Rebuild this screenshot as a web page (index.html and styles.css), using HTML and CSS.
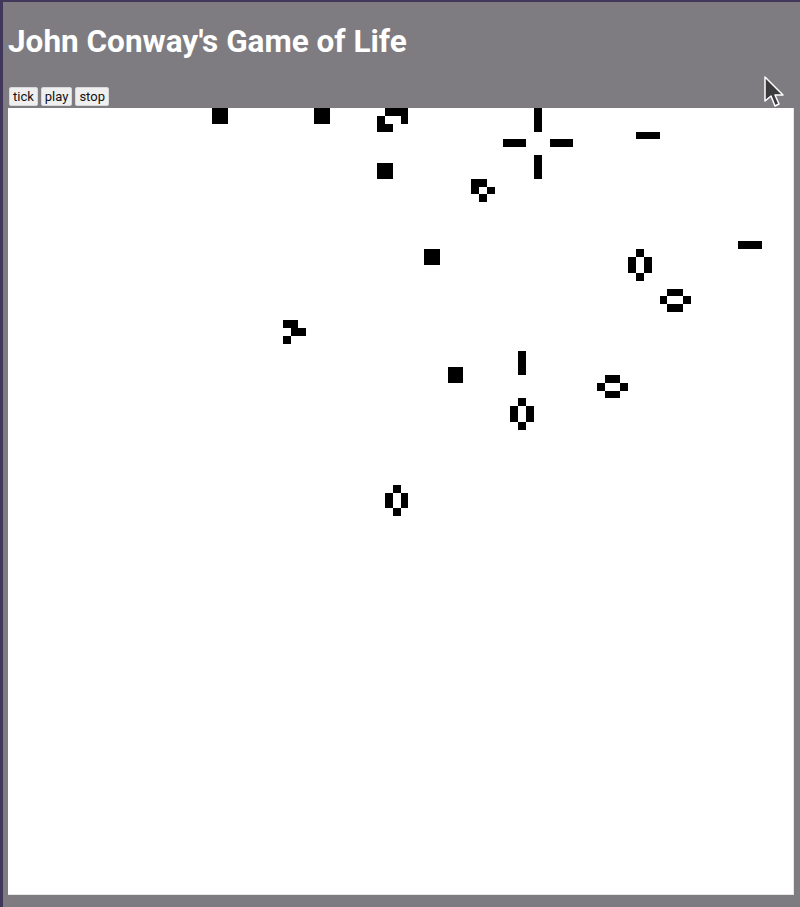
FILE: index.html
```html
<!DOCTYPE html>
<html lang="en">
<head>
  <meta charset="UTF-8">
  <title>John Conway's Game of Life</title>
  <link rel="stylesheet" href="styles.css">
</head>
<body>
  <h1 class="title">John Conway's Game of Life</h1>
  <div class="controls">
    <button id="tick">tick</button>
    <button id="play">play</button>
    <button id="stop">stop</button>
  </div>
  <canvas id="board" class="board" width="785" height="786"></canvas>
  <svg class="cursor" width="22" height="34" viewBox="0 0 22 34">
    <path d="M2 2 L2 26 L8 21 L12 31 L16 29 L12 20 L20 20 Z" fill="#3b3b3d" stroke="#fff" stroke-width="1.5" stroke-linejoin="round"/>
  </svg>
  <script src="life.js"></script>
</body>
</html>
```

FILE: styles.css
```css
html { background: #7e7c80; }
body {
  margin: 0;
  padding: 0 7px 12px 5px;
  border-top: 2px solid #41375a;
  border-left: 3px solid #41375a;
  font-family: Roboto, Arial, sans-serif;
  position: relative;
}
.title {
  margin: 0;
  padding-top: 20px;
  font-size: 31.5px;
  font-weight: bold;
  color: #fff;
  line-height: 40px;
}
.controls {
  margin-top: 25px;
  margin-bottom: 2px;
  display: flex;
  gap: 3px;
  padding-left: 1px;
}
.controls button {
  font-family: Roboto, Arial, sans-serif;
  font-size: 13px;
  padding: 0 3px;
  height: 19px;
  background: #efefef;
  border: 1px solid #d8d8d8;
  border-radius: 2px;
  color: #111;
}
.board {
  display: block;
  background: #fff;
  border-right: 1px solid #e6e6e6;
  border-bottom: 1px solid #e6e6e6;
}
.cursor {
  position: absolute;
  left: 760px;
  top: 73px;
}
```

FILE: life.js
```js
// Game of Life on a 100x100 grid
const COLS = 100, ROWS = 100;
const canvas = document.getElementById('board');
const ctx = canvas.getContext('2d');
const size = 7.85;

let live = new Set([
  '26,0','27,0','26,1','27,1',
  '39,0','40,0','39,1','40,1',
  '48,0','49,0','50,0','47,1','50,1','47,2','48,2',
  '47,7','48,7','47,8','48,8',
  '67,0','67,1','67,2','63,4','64,4','65,4','69,4','70,4','71,4','67,6','67,7','67,8',
  '80,3','81,3','82,3',
  '59,9','60,9','59,10','61,10','60,11',
  '93,17','94,17','95,17',
  '80,18','79,19','81,19','79,20','81,20','80,21',
  '84,23','85,23','83,24','86,24','84,25','85,25',
  '53,18','54,18','53,19','54,19',
  '56,33','57,33','56,34','57,34',
  '35,27','36,27','36,28','37,28','35,29',
  '65,31','65,32','65,33',
  '65,37','64,38','66,38','64,39','66,39','65,40',
  '76,34','77,34','75,35','78,35','76,36','77,36',
  '49,48','48,49','50,49','48,50','50,50','49,51'
]);

function draw() {
  ctx.fillStyle = '#fff';
  ctx.fillRect(0, 0, canvas.width, canvas.height);
  ctx.fillStyle = '#000';
  live.forEach(key => {
    const [c, r] = key.split(',').map(Number);
    ctx.fillRect(Math.round(c * size), Math.round(r * size),
      Math.round((c + 1) * size) - Math.round(c * size),
      Math.round((r + 1) * size) - Math.round(r * size));
  });
}

function tick() {
  const counts = new Map();
  live.forEach(key => {
    const [c, r] = key.split(',').map(Number);
    for (let dc = -1; dc <= 1; dc++) {
      for (let dr = -1; dr <= 1; dr++) {
        if (!dc && !dr) continue;
        const nc = c + dc, nr = r + dr;
        if (nc < 0 || nr < 0 || nc >= COLS || nr >= ROWS) continue;
        const k = nc + ',' + nr;
        counts.set(k, (counts.get(k) || 0) + 1);
      }
    }
  });
  const next = new Set();
  counts.forEach((n, k) => {
    if (n === 3 || (n === 2 && live.has(k))) next.add(k);
  });
  live = next;
  draw();
}

let timer = null;
document.getElementById('tick').addEventListener('click', tick);
document.getElementById('play').addEventListener('click', () => {
  if (!timer) timer = setInterval(tick, 100);
});
document.getElementById('stop').addEventListener('click', () => {
  clearInterval(timer);
  timer = null;
});

draw();
```
